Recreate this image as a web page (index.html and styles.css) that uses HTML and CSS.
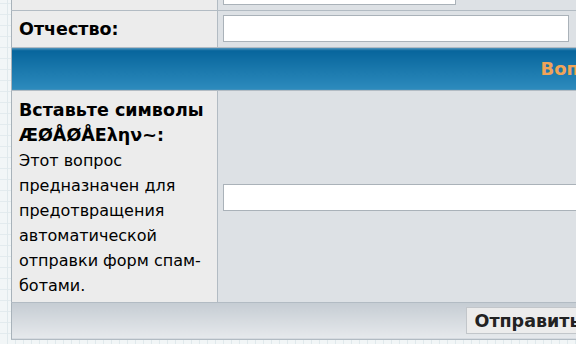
FILE: index.html
```html
<!DOCTYPE html>
<html lang="ru">
<head>
  <meta charset="UTF-8" />
  <title>Регистрация</title>
  <link rel="stylesheet" href="styles.css">
</head>
<body>

<div class="page">
  <table class="form-table">
    <tr>
      <td class="label-cell">&nbsp;</td>
      <td class="field-cell"><input type="text" class="field short" value="фрр рфрр"></td>
    </tr>
    <tr>
      <td class="label-cell"><b>Отчество:</b></td>
      <td class="field-cell"><input type="text" class="field mid"></td>
    </tr>
    <tr>
      <td class="head-cell" colspan="2">Вопрос безопасности</td>
    </tr>
    <tr>
      <td class="label-cell tall">
        <b>Вставьте символы ÆØÅØÅΕλην~:</b>
        <span class="hint">Этот вопрос предназначен для предотвращения автоматической отправки форм спам-ботами.</span>
      </td>
      <td class="field-cell"><input type="text" class="field wide"></td>
    </tr>
    <tr>
      <td class="foot-cell" colspan="2"><button class="btn" type="submit">Отправить</button></td>
    </tr>
  </table>
</div>

</body>
</html>
```

FILE: styles.css
```css
* {
  margin: 0;
  padding: 0;
  box-sizing: border-box;
}

body {
  font-family: 'DejaVu Sans', Verdana, sans-serif;
  color: #000;
  overflow: hidden;
  height: 344px;
  background-color: #f2f6f7;
  background-image:
    repeating-linear-gradient(90deg, transparent 0 7px, #e0e9ec 7px 8px),
    repeating-linear-gradient(0deg, transparent 0 10px, #e3ebee 10px 11px);
}

.page {
  padding-left: 11px;
  margin-top: -27px;
}

.form-table {
  width: 1280px;
  border-collapse: collapse;
  border-left: 1px solid #a8b2ba;
}

.form-table td {
  border-bottom: 1px solid #b2bbc3;
}

.label-cell {
  width: 206px;
  background: #ececec;
  border-right: 1px solid #b2bbc3;
  padding: 0 7px;
  height: 37px;
  font-size: 17.5px;
  vertical-align: middle;
}

.label-cell.tall {
  height: 211px;
  padding-top: 7px;
  padding-bottom: 4px;
  line-height: 25px;
  vertical-align: top;
}

.hint {
  display: block;
  font-size: 16px;
}

.field-cell {
  background: #dde1e5;
  padding: 0 5px;
  vertical-align: middle;
}

.field {
  display: block;
  height: 27px;
  border: 1px solid #aab2b9;
  background: #fff;
  font-family: inherit;
  font-size: 15px;
  padding: 0 4px;
  color: #222;
}

.field.short {
  width: 233px;
}

.field.mid {
  width: 346px;
}

.field.wide {
  width: 700px;
  margin-top: 2px;
}

.head-cell {
  height: 43px;
  background: linear-gradient(to bottom, #4f93bb 0, #4f93bb 1px, #07659c 3px, #2d8bbd 100%);
  border-bottom: 1px solid #c3d0d8;
  color: #f0a458;
  font-weight: bold;
  font-size: 18px;
  text-align: center;
  vertical-align: middle;
}

.foot-cell {
  height: 37px;
  background: linear-gradient(to bottom, #c5ccd3, #e6e9ec);
  border-bottom: 1px solid #b8c0c7;
  text-align: center;
  vertical-align: middle;
  padding-right: 248px;
}

.btn {
  font-family: inherit;
  font-size: 17.5px;
  font-weight: bold;
  color: #222;
  background: #ececec;
  border: 1px solid #c2c6ca;
  height: 27px;
  padding: 0 8px;
  cursor: pointer;
}
```
